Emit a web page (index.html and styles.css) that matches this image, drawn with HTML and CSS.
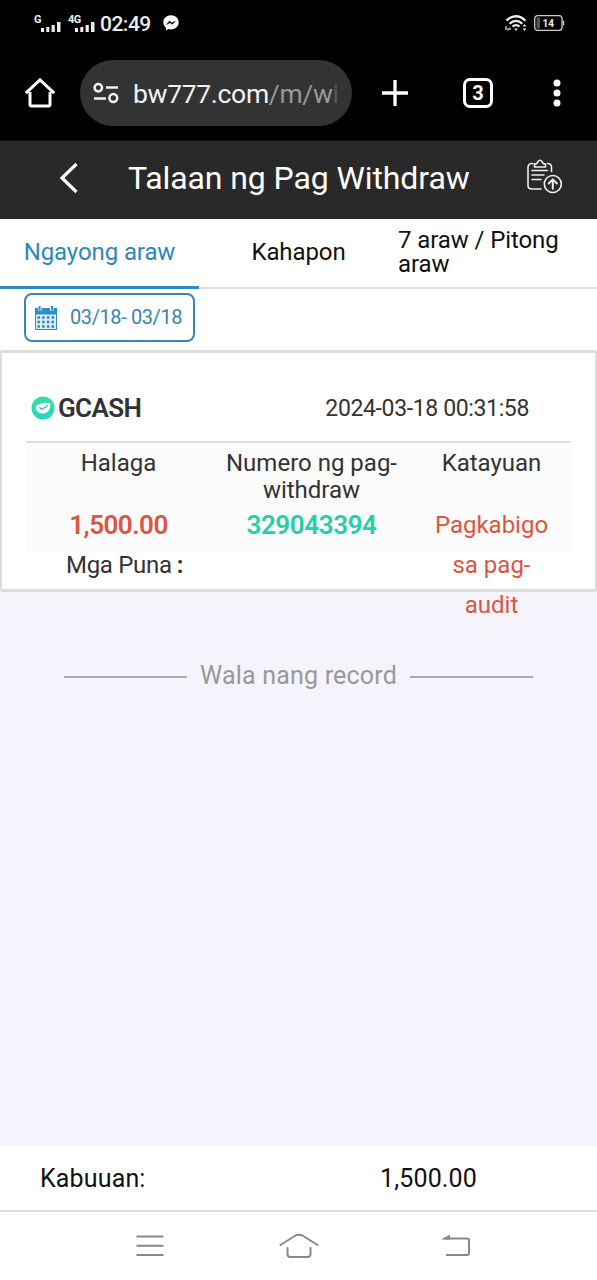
FILE: index.html
```html
<!DOCTYPE html>
<html lang="fil">
<head>
<meta charset="utf-8">
<meta name="viewport" content="width=device-width, initial-scale=1">
<title>Talaan ng Pag Withdraw</title>
<link rel="stylesheet" href="styles.css">
</head>
<body>
<div class="status">
  <div class="signals">
    <span class="net net-g">G</span>
    <svg class="bars" width="20" height="10" viewBox="0 0 20 10" fill="#eee"><path d="M0 6h3v4H0zM5.3 5h3v5h-3zM10.6 3h3.2v7h-3.2zM16 0h3.5v10H16z"/></svg>
    <span class="net net-4g">4G</span>
    <svg class="bars bars-2" width="20" height="10" viewBox="0 0 20 10" fill="#eee"><path d="M0 6h3v4H0zM5.3 5h3v5h-3zM10.6 3h3.2v7h-3.2zM16 0h3.5v10H16z"/></svg>
    <span class="clock">02:49</span>
    <svg class="messenger" width="16" height="16" viewBox="0 0 16 16"><path d="M8 .3C3.600.3.3 3.400.3 7.300c0 2.200 1 4.100 2.600 5.400v2.700l2.600-1.300c.8.2 1.600.3 2.500.3 4.400 0 7.700-3.200 7.700-7.100S12.400.3 8 .3z" fill="#fff"/><path d="M3.600 9.400 6.500 6l2.300 1.900 3.500-1.700L9.500 9.300 7 7.800z" fill="#000" stroke="#000" stroke-width=".5"/></svg>
  </div>
  <div class="power">
    <svg width="22" height="17" viewBox="0 0 22 17" fill="none" stroke="#eee"><path d="M1.500 5.600C7-.2 15-.2 20.300 5.600" stroke-width="2.300"/><path d="M4.500 8.700c4-3.900 9-3.900 12.800 0" stroke-width="2.200"/><path d="M7.500 11.600c2.300-2 4.700-2 7 0" stroke-width="2.200"/><path d="M9.200 13.500h3.600L11 16z" fill="#eee" stroke="none"/><path d="M1 11v4M3 13v2.500M5 12.500V15" stroke-width="1.200"/><path d="m19.500 9 1.800 2.500h-3.600zM19.500 16l1.800-2.500h-3.600z" fill="#eee" stroke="none"/></svg>
    <svg width="31" height="16" viewBox="0 0 31 16"><rect x=".7" y=".7" width="27.300" height="14.600" rx="3" fill="none" stroke="#ccc" stroke-width="1.300"/><rect x="2.500" y="2.500" width="3.500" height="11" fill="#555"/><path d="M29.500 5.500v5" stroke="#ccc" stroke-width="1.300"/><text class="battery-text" x="14.300" y="11.700" text-anchor="middle">14</text></svg>
  </div>
</div>
<div class="browser">
  <svg class="home" width="32" height="32" viewBox="0 0 32 32" fill="none" stroke="#fff" stroke-width="3"><path d="M6 15v12.500q0 1.500 1.500 1.500h17q1.500 0 1.500-1.500V15" /><path d="M1.800 16.200 16 2.800l14.200 13.400"/></svg>
  <div class="address">
    <svg width="26" height="22" viewBox="0 0 26 22" fill="none" stroke="#f2f2f2" stroke-width="2.500"><circle cx="5.300" cy="5.800" r="3.700"/><path d="M13 5.500h12M1 16.500h12"/><circle cx="20.300" cy="16" r="3.900"/></svg>
    <span class="url">bw777.com<span class="path">/m/w<span class="fade">i</span></span></span>
  </div>
  <svg class="plus" width="28" height="28" viewBox="0 0 28 28" stroke="#fff" stroke-width="3.300"><path d="M14 1v26M1 14h26"/></svg>
  <div class="tab-count">3</div>
  <svg class="more" width="8" height="28" viewBox="0 0 8 28" fill="#fff"><circle cx="4" cy="4" r="3.500"/><circle cx="4" cy="14" r="3.500"/><circle cx="4" cy="24" r="3.500"/></svg>
</div>
<header class="header">
  <svg class="back" width="20" height="32" viewBox="0 0 20 32" fill="none" stroke="#fff" stroke-width="3.200"><path d="M17.500 2 3 16l14.500 14"/></svg>
  <h1>Talaan ng Pag Withdraw</h1>
  <svg class="record" width="36" height="36" viewBox="0 0 36 36" fill="none" stroke="#eee" stroke-width="1.600" stroke-linecap="round" stroke-linejoin="round"><path d="M7 4.500H5.500Q2 5 2 8.500v18Q2 30 6 30h9M21.500 4.500q4 0 4 4v4"/><path d="M8.500 8V5q3 0 3.500-2.500 2-2.500 4 0Q16.500 5 19.500 5v3z"/><path d="M6 11.500h15.500M6 16h12M6 20.500h9"/><circle cx="26.800" cy="25" r="8.500"/><path d="M26.800 29.800v-9M22.700 24.500l4.100-4.100 4.100 4.100" stroke-width="2"/></svg>
</header>
<nav class="tabs">
  <div class="tab active">Ngayong araw</div>
  <div class="tab">Kahapon</div>
  <div class="tab tab-long">7 araw / Pitong araw</div>
</nav>
<div class="filter">
  <div class="date">
    <svg width="22" height="24" viewBox="0 0 22 24"><path d="M0 2h3v2.500h3.500V2h8.500v2.500h3.500V2H22v22H0z" fill="#2c8fcb"/><path d="M3.600 0h2v4h-2zM16 0h2v4h-2z" fill="#2c8fcb"/><path d="M1 8.500h20V23H1z" fill="#d9edf8"/><g stroke="#2c83b7" stroke-width="2.400" stroke-dasharray="2.400 2.300"><path d="M2.500 11.500h17M2.500 16h17M2.500 20.500h17"/></g></svg>
    <span>03/18- 03/18</span>
  </div>
</div>
<main class="content">
  <section class="card">
    <div class="card-head">
      <svg width="24" height="24" viewBox="0 0 24 24"><defs><linearGradient id="mint" x2="0" y2="1"><stop stop-color="#35df9f"/><stop offset="1" stop-color="#29d4c4"/></linearGradient></defs><circle cx="12" cy="12" r="11.500" fill="url(#mint)"/><path d="M5 9.500q3-2 8-2.500 5-.7 6 0 1 2-.5 6-2 4.500-6.500 4.500-5 0-7-4-.5-2.500 0-4z" fill="#f4fffc"/><path d="m8.500 11.500 2.500 1.700 6-3.700" fill="none" stroke="#4fae97" stroke-width="1.300"/></svg>
      <strong>GCASH</strong>
      <time>2024-03-18 00:31:58</time>
    </div>
    <div class="details">
      <div class="col"><div class="label">Halaga</div><div class="value amount">1,500.00</div></div>
      <div class="col"><div class="label">Numero ng pag-withdraw</div><div class="value number">329043394</div></div>
      <div class="col"><div class="label">Katayuan</div><div class="value state">Pagkabigo sa pag-audit</div></div>
    </div>
    <div class="remarks">Mga Puna<span class="colon">:</span></div>
  </section>
  <div class="end"><span class="rule"></span><span class="end-text">Wala nang record</span><span class="rule"></span></div>
</main>
<footer class="total"><span class="total-label">Kabuuan:</span><span class="total-value">1,500.00</span></footer>
<div class="system">
  <svg width="28" height="22" viewBox="0 0 28 22" stroke="#888" stroke-width="2"><path d="M.5 1.500h27M.5 10.700h27M.5 19.900h27"/></svg>
  <svg class="sys-home" width="40" height="26" viewBox="0 0 40 26" fill="none" stroke="#888" stroke-width="2" stroke-linecap="round" stroke-linejoin="round"><path d="M1.500 12 16.500 2.500q3.500-1.500 7 0L38.500 12M8.500 15v6q0 3 3 3h17q3 0 3-3v-6"/></svg>
  <svg width="30" height="24" viewBox="0 0 30 24" fill="none" stroke="#888" stroke-width="2"><path d="M3 4.500h23q2 0 2 2V19q0 2-2 2H5"/><path d="M9 .5v5H0z" fill="#888" stroke="none"/></svg>
</div>
</body>
</html>
```
FILE: styles.css
```css
* { box-sizing: border-box; }
body { margin: 0; width: 597px; height: 1280px; overflow: hidden; display: flex; flex-direction: column; font-family: Roboto, sans-serif; background: #fff; color: #111; }
svg { display: block; flex: none; }
.status { height: 47px; flex: none; background: #000; color: #eee; display: flex; justify-content: space-between; padding: 0 32px 0 34px; }
.signals { display: flex; align-items: flex-start; }
.net { font-size: 11px; line-height: 12px; font-weight: 700; margin-top: 14px; }
.net-g { width: 7px; }
.net-4g { width: 14px; margin-left: 7px; letter-spacing: -.5px; }
.bars { margin-top: 22px; }
.bars-2 { margin-left: -7px; }
.clock { font-size: 21px; line-height: 24px; font-weight: 500; letter-spacing: -.5px; margin: 12px 0 0 5px; width: 52px; white-space: nowrap; }
.messenger { margin: 15px 0 0 11px; }
.power { display: flex; gap: 7px; padding-top: 15px; }
.battery-text { font: 700 10px Roboto, sans-serif; fill: #eee; }
.browser { height: 94px; flex: none; background: #000; display: flex; align-items: center; padding: 0 36px 2px 24px; border-bottom: 1px solid #111; }
.address { width: 272px; height: 66px; margin-left: 24px; border-radius: 33px; background: #333; display: flex; align-items: center; padding-left: 13px; gap: 14px; }
.url { color: #f3f3f3; font-size: 26.5px; line-height: 36px; letter-spacing: -.32px; white-space: nowrap; margin-top: 2px; }
.path { color: #999; }
.fade { color: #595959; }
.plus { margin-left: 29px; }
.tab-count { margin-left: 54px; width: 30px; height: 30px; border: 3px solid #fff; border-radius: 7px; color: #fff; font-size: 20px; line-height: 24px; font-weight: 700; text-align: center; }
.more { margin-left: auto; }
.header { height: 78px; flex: none; background: #292929; display: flex; align-items: center; padding: 0 35px 0 59px; }
.back { margin-top: -4px; }
.header h1 { margin: -4px 0 0 49px; width: 342px; color: #fff; font-size: 32px; line-height: 40px; letter-spacing: -.1px; font-weight: 400; white-space: nowrap; }
.record { margin: -6px 0 0 auto; }
.tabs { height: 70px; flex: none; display: flex; border-bottom: 2px solid #ddd; }
.tab { width: 199px; height: 70px; display: flex; align-items: center; justify-content: center; padding-bottom: 5px; font-size: 24px; line-height: 24px; letter-spacing: -.1px; color: #111; }
.tab.active { color: #2c87bd; border-bottom: 3px solid #3289bf; padding-bottom: 2px; }
.tab-long { justify-content: flex-start; padding-right: 20px; }
.filter { height: 61px; flex: none; padding: 4px 24px; }
.date { width: 171px; height: 49px; border: 2px solid #3787b0; border-radius: 8px; display: flex; align-items: center; padding-left: 9px; gap: 13px; color: #3b83b0; font-size: 20px; letter-spacing: -.4px; white-space: nowrap; }
.date span { margin-top: -2px; }
.content { flex: 1; min-height: 0; background: #f5f4fd; }
.card { height: 242px; border: solid #dcdcdc; border-width: 3px 2px; border-radius: 3px; background: #fff; padding: 0 24px; color: #333; }
.card-head { height: 90px; display: flex; align-items: center; padding: 22px 0 0 5px; border-bottom: 2px solid #ddd; }
.card-head strong { margin-left: 3px; font-size: 26px; font-weight: 600; letter-spacing: -.6px; }
.card-head time { margin-left: auto; margin-right: 42px; font-size: 23px; letter-spacing: -.36px; }
.details { height: 109px; display: grid; grid-template-columns: 185px 201px 159px; background: #fbfbfb; padding-top: 7px; text-align: center; }
.label { height: 55px; font-size: 24px; line-height: 27px; padding: 0 10px; }
.value { font-size: 26px; line-height: 40px; }
.amount { color: #db5542; font-weight: 600; letter-spacing: -.5px; }
.number { color: #27ceaa; font-weight: 600; letter-spacing: -.4px; }
.state { color: #db5542; font-size: 24px; padding: 0 20px; }
.remarks { padding-left: 40px; font-size: 24px; line-height: 27px; letter-spacing: -.3px; }
.colon { margin-left: 5px; font-weight: 700; }
.end { margin-top: 67px; display: flex; align-items: center; justify-content: center; gap: 13px; color: #999; font-size: 25px; line-height: 34px; letter-spacing: .2px; }
.rule { width: 123px; height: 2px; background: #aaa9b0; margin-top: 2px; }
.end-text { white-space: nowrap; }
.total { height: 66px; flex: none; display: flex; align-items: center; border-bottom: 2px solid #ddd; padding-left: 40px; font-size: 25px; letter-spacing: .15px; }
.total-label { width: 340px; }
.system { height: 68px; flex: none; display: flex; align-items: center; padding-left: 136px; }
.sys-home { margin: 0 122px 0 115px; }
```
